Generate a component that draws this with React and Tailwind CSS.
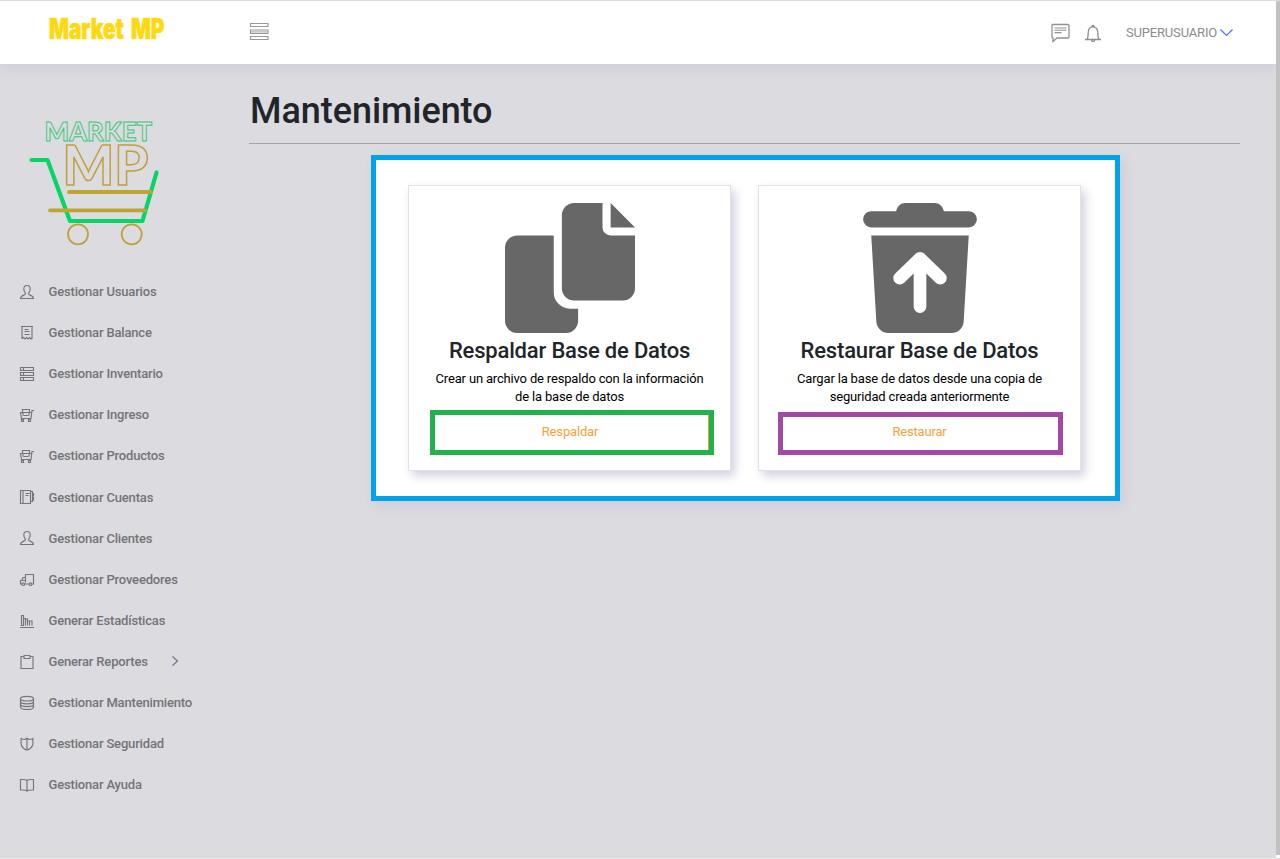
import React from 'react';

const ICONS = {
  user: (
    <path d="M8 1.500c-2 0-3.200 1.300-3.200 3.300 0 2 .6 3.300 1.500 4.200v1.300c-.5.9-4.800 1.200-4.800 4.200h13c0-3-4.300-3.300-4.800-4.200V9c.9-.9 1.500-2.200 1.500-4.200 0-2-1.200-3.300-3.200-3.300z" />
  ),
  receipt: (
    <path d="M2 1.500h12M3 1.500v12.500M13 1.500v12.500M5.500 4.500h4M5.500 6.500h5M5.500 9.500h5M3 13.500l1.500-1 1.500 1.500 1.500-1.500 1.500 1.500 1.500-1.500 1.500 1.500 1-1" />
  ),
  list: (
    <path d="M1.500 1.500h3v3h-3zM4.500 1.500h10v3h-10M1.500 6.500h3v3h-3zM4.500 6.500h10v3h-10M1.500 11.500h3v3h-3zM4.500 11.500h10v3h-10" />
  ),
  cart: (
    <path d="M15 3.500h-2l-1 8h-9.500l-1-6h11M3.500 5v-2.500h7v2.500M4.500 8.500h5M4 5.500v3M10 5.500v3M2.500 12.500h2v2h-2zM9.500 12.500h2v2h-2z" />
  ),
  notebook: (
    <path d="M1.500 1.500h10v13h-10zM4 1.500v13M6.500 4.500h4M6.500 6.500h3M11.500 2.500h2v10h-2M13.500 4.500h1v2.500h-1M13.500 8.500h1v2.500h-1" />
  ),
  truck: (
    <>
      <path d="M6.500 11.500v-8h8v9.500h-1.500M6.500 6.500h-2.500l-1 2.500-1.500.5v3.500h1.500M5.500 13h4.500M3 9.500h3.500" />
      <circle cx="4.300" cy="13.200" r="1.300" />
      <circle cx="11.500" cy="13.200" r="1.300" />
    </>
  ),
  chart: (
    <path d="M1 14.500h14M2.500 12.500v-10h2v10zM6.500 12.500v-6.500h2v6.500M10.500 12.500v-4.500h2.500v4.500M4.500 5.500h2v7M8.500 8h2" />
  ),
  clipboard: <path d="M5 2.500H2v12h12v-12h-3M5 1.500h6v3H5z" />,
  database: (
    <>
      <ellipse cx="8" cy="3.700" rx="6.500" ry="2.300" />
      <path d="M1.500 3.700v8.300c0 1.400 2.900 2.500 6.500 2.500s6.500-1.100 6.500-2.500v-8.300M1.500 6.500c0 1.400 2.900 2.300 6.500 2.300s6.500-.9 6.500-2.300M1.500 9.300c0 1.400 2.900 2.300 6.500 2.300s6.500-.9 6.500-2.300" />
    </>
  ),
  shield: (
    <path d="M2 2c1.500 2 4 2 6 .3 2 1.700 4.500 1.700 6-.3-.6 2 .6 4.800-.5 7.500-1 2.400-3 3.900-5.500 4.500-2.500-.6-4.500-2.100-5.500-4.500-1.100-2.700.1-5.500-.5-7.500zM8 2.300v11.700" />
  ),
  book: (
    <path d="M8 3.500c-1.200-1.200-2.500-1-6.500-1v10.500c4 0 5.300-.2 6.500 1 1.200-1.200 2.500-1 6.500-1v-10.500c-4 0-5.300-.2-6.500 1zM8 3.500v10.500" />
  ),
};

const MENU = [
  ['user', 'Gestionar Usuarios'],
  ['receipt', 'Gestionar Balance'],
  ['list', 'Gestionar Inventario'],
  ['cart', 'Gestionar Ingreso'],
  ['cart', 'Gestionar Productos'],
  ['notebook', 'Gestionar Cuentas'],
  ['user', 'Gestionar Clientes'],
  ['truck', 'Gestionar Proveedores'],
  ['chart', 'Generar Estadísticas'],
  ['clipboard', 'Generar Reportes', true],
  ['database', 'Gestionar Mantenimiento'],
  ['shield', 'Gestionar Seguridad'],
  ['book', 'Gestionar Ayuda'],
];

function MarketLogo() {
  return (
    <svg className="ml-5 h-[145px] w-[150px] shrink-0" viewBox="0 0 150 145" fill="none">
      <text x="24.500" y="31" fontFamily="Lato" fontWeight="900" fontSize="27" textLength="107.500" lengthAdjust="spacingAndGlyphs" stroke="#3cc878" strokeWidth="1">MARKET</text>
      <text x="42.500" y="75" fontFamily="Lato" fontWeight="900" fontSize="56" textLength="86" lengthAdjust="spacingAndGlyphs" stroke="#bfa13c" strokeWidth="1.500">MP</text>
      <path d="M11.500 50H27.500L50 111H122.500L136.500 62.500" stroke="#08d565" strokeWidth="4.200" strokeLinecap="round" strokeLinejoin="round" />
      <path d="M49 82H131M30 100.300H125" stroke="#bfa432" strokeWidth="3.800" strokeLinecap="round" />
      <circle cx="58" cy="124.300" r="10" stroke="#bfa13c" strokeWidth="1.800" />
      <circle cx="111.700" cy="124.300" r="10" stroke="#bfa13c" strokeWidth="1.800" />
    </svg>
  );
}

function Sidebar() {
  return (
    <aside className="flex w-[249px] shrink-0 flex-col pt-[46px]">
      <MarketLogo />
      <nav className="mt-[16.4px] flex flex-col">
        {MENU.map(([icon, label, expandable]) => (
          <a key={label} className="flex h-[41.08px] items-center pl-[19px] text-[13px] font-medium tracking-[-0.17px] text-[#747476]">
            <svg className="h-4 w-4 shrink-0" viewBox="0 0 16 16" fill="none" stroke="#76767a" strokeWidth="1.15">
              {ICONS[icon]}
            </svg>
            <span className="ml-[13.5px] whitespace-nowrap">{label}</span>
            {expandable && (
              <svg className="ml-[22.5px] h-3 w-3" viewBox="0 0 12 12" fill="none" stroke="#6b7787" strokeWidth="1.200">
                <path d="M2.500 .5l5 4.500-5 4.500" />
              </svg>
            )}
          </a>
        ))}
      </nav>
    </aside>
  );
}

function Header() {
  return (
    <header className="flex h-16 shrink-0 items-start border-t border-[#dadada] bg-white shadow-[0_2px_14px_rgba(150,150,200,0.25)]">
      <svg className="ml-12 mt-1.5 h-11 w-[124px] shrink-0 overflow-visible" viewBox="0 0 124 44">
        <text x="1" y="32" fontFamily="Inter" fontWeight="900" fontSize="28.500" wordSpacing="4" textLength="115.500" lengthAdjust="spacingAndGlyphs" fill="#ffd90f" stroke="#ffd90f" strokeWidth="0.600">Market MP</text>
      </svg>
      <svg className="ml-[77px] mt-[21px] h-5 w-5" viewBox="0 0 20 20" fill="none" stroke="#989898" strokeWidth="1.200">
        <path d="M1.500 1.500h17.500v3h-17.500zM1.500 8h17.500v3.500h-17.500zM1.500 14.500h17.500v3h-17.500z" />
        <path d="M2 9.700h16.500" stroke="#c8c8c8" strokeWidth="2" />
      </svg>
      <div className="ml-auto mr-[42px] flex">
        <svg className="mt-[22px] h-5 w-5" viewBox="0 0 20 20" fill="none" stroke="#929292" strokeWidth="1.300">
          <path d="M2.500 1.500h15.500q1 0 1 1v11.500q0 1-1 1h-11l-4 3.500v-3.500q-1 0-1-1v-11.500q0-1 1-1z" />
          <path d="M4.500 5h12M4.500 7.300h12M4.500 9.600h7" strokeWidth="1.100" />
        </svg>
        <svg className="ml-[13px] mt-[23px] h-5 w-5" viewBox="0 0 20 20" fill="none" stroke="#8d8d8d" strokeWidth="1.300">
          <path d="M2 15.500h16M4 15.500c1.400-2 1-4 1.200-7 .2-3.500 2-5.700 4.800-5.700s4.600 2.200 4.800 5.700c.2 3-.2 5 1.200 7M8.800 2.500q0-1 1.200-1t1.200 1M8.500 16q0 1.500 1.500 1.500t1.500-1.500" />
        </svg>
        <span className="ml-[23px] mt-[22px] text-[13px] leading-5 tracking-[-0.18px] text-[#8c8c8c]">SUPERUSUARIO</span>
        <svg className="ml-[2px] mt-[26px] h-3 w-[15px]" viewBox="0 0 15 12" fill="none" stroke="#4d70ff" strokeWidth="1.200">
          <path d="M1.500 2.500l6 6 6-6" />
        </svg>
      </div>
    </header>
  );
}

function CopyIcon() {
  return (
    <svg className="h-[130px] w-[130px] shrink-0" viewBox="0 0 512 512" fill="#676767">
      <path d="M272 0H384V96a32 32 0 0 0 32 32H512V336a48 48 0 0 1-48 48H272a48 48 0 0 1-48-48V48a48 48 0 0 1 48-48zM416 0V96H512zM48 128H192V352a64 64 0 0 0 64 64H288V464a48 48 0 0 1-48 48H48a48 48 0 0 1-48-48V176a48 48 0 0 1 48-48z" />
    </svg>
  );
}

function RestoreIcon() {
  return (
    <svg className="h-[130px] w-[114px] shrink-0" viewBox="0 0 448 512" fill="#676767">
      <path d="M32 32H130C135 12 148 0 166 0H282C300 0 313 12 318 32H416a32 32 0 0 1 0 64H32a32 32 0 0 1 0-64zM32 128H416L396 467a48 48 0 0 1-48 45H100a48 48 0 0 1-48-45z" />
      <path d="M144 296L224 218L304 296M224 218V408" fill="none" stroke="white" strokeWidth="50" strokeLinecap="round" strokeLinejoin="round" />
    </svg>
  );
}

function ActionCard({ icon, title, lines, children }) {
  return (
    <section className="flex h-[286px] w-[323px] flex-col items-center border border-[#e2e2e4] bg-white pt-[17px] text-center shadow-[4px_5px_9px_rgba(70,60,130,0.24)]">
      {icon}
      <h2 className="mt-[4px] text-[22px] font-medium leading-7 tracking-[-0.18px] text-[#212529]">{title}</h2>
      <p className="mt-[5px] text-[13px] leading-[18px] tracking-[-0.17px] text-black">
        {lines[0]}
        <br />
        {lines[1]}
      </p>
      {children}
    </section>
  );
}

export default function App() {
  return (
    <div className="flex h-[859px] w-[1280px] overflow-hidden bg-[#dcdbe0] font-['Roboto',sans-serif]">
      <div className="flex w-[1276px] shrink-0 flex-col border-b border-[#e8e8e8]">
        <Header />
        <div className="flex flex-1">
          <Sidebar />
          <main className="flex w-[991px] flex-col">
            <h1 className="mt-[23px] pl-px text-[36px] font-medium leading-[48px] tracking-[-0.06px] text-[#212529]">Mantenimiento</h1>
            <div className="mt-[8px] h-px bg-[#a4a3a7]" />
            <div className="ml-[122px] mt-[11px] flex h-[346px] w-[749px] gap-[27px] border-[5px] border-[#00a2e8] bg-white pl-8 pt-[25px] shadow-[3px_4px_12px_rgba(80,70,150,0.10)]">
              <ActionCard
                icon={<CopyIcon />}
                title="Respaldar Base de Datos"
                lines={['Crear un archivo de respaldo con la información', 'de la base de datos']}
              >
                <button className="ml-[4px] mt-[4px] flex h-[45px] w-[284px] border-[5px] border-[#22b14c] bg-white text-[13px] tracking-[-0.17px] text-[#f6a23c]">
                  <span className="h-full flex-1 border-r border-[#e5a632] pr-[2px] pt-[8px] leading-[18px]">Respaldar</span>
                </button>
              </ActionCard>
              <ActionCard
                icon={<RestoreIcon />}
                title="Restaurar Base de Datos"
                lines={['Cargar la base de datos desde una copia de', 'seguridad creada anteriormente']}
              >
                <button className="ml-[2px] mt-[6px] h-[43px] w-[285px] border-[5px] border-[#a349a4] bg-white pb-[4px] pr-[2px] text-[13px] leading-[18px] tracking-[-0.17px] text-[#f6a23c]">
                  Restaurar
                </button>
              </ActionCard>
            </div>
          </main>
        </div>
      </div>
      <div className="flex w-1 flex-col">
        <div className="h-px bg-[#dadada]" />
        <div className="h-[854px] rounded-t-sm bg-[#c1c1c1]" />
        <div className="h-[3px] bg-white" />
        <div className="h-px bg-[#dadada]" />
      </div>
    </div>
  );
}
